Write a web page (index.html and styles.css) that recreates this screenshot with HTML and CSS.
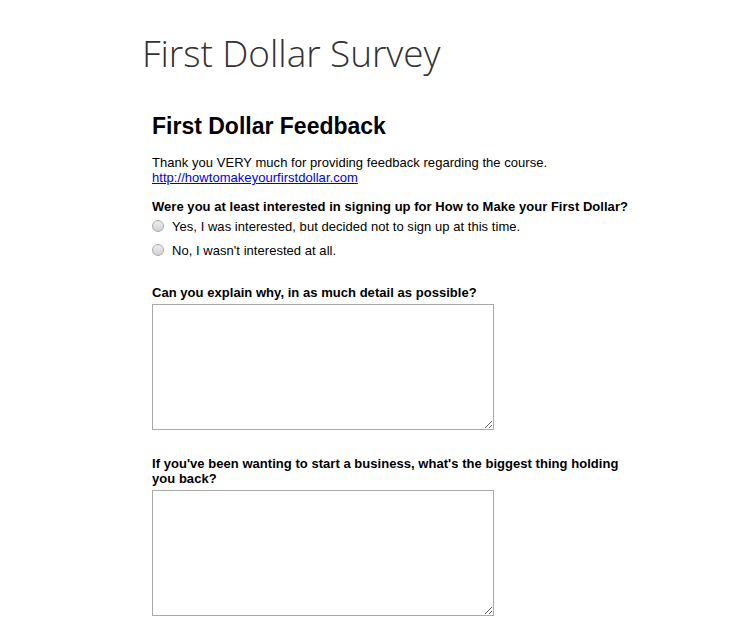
FILE: index.html
```html
<!DOCTYPE html>
<html>
<head>
<meta charset="utf-8">
<title>First Dollar Survey</title>
<link rel="stylesheet" href="styles.css">
</head>
<body>
<header class="site-header">
  <h1 class="site-title">First Dollar Survey</h1>
</header>
<main class="form">
  <h2 class="form-title">First Dollar Feedback</h2>
  <p class="intro">Thank you VERY much for providing feedback regarding the course.<br><a href="#">http://howtomakeyourfirstdollar.com</a></p>
  <div class="question">
    <div class="q-label">Were you at least interested in signing up for How to Make your First Dollar?</div>
    <label class="choice"><input type="radio" name="q1"><span>Yes, I was interested, but decided not to sign up at this time.</span></label>
    <label class="choice"><input type="radio" name="q1"><span>No, I wasn't interested at all.</span></label>
  </div>
  <div class="question text-q">
    <div class="q-label">Can you explain why, in as much detail as possible?</div>
    <textarea class="answer"></textarea>
  </div>
  <div class="question text-q">
    <div class="q-label">If you've been wanting to start a business, what's the biggest thing holding you back?</div>
    <textarea class="answer"></textarea>
  </div>
</main>
</body>
</html>
```

FILE: styles.css
```css
html, body {
  margin: 0;
  padding: 0;
  background: #fff;
}
body {
  font-family: "Liberation Sans", Arial, sans-serif;
  font-size: 13px;
  letter-spacing: 0.04px;
  color: #000;
}
.site-header {
  padding: 28px 0 0 142px;
}
.site-title {
  margin: 0;
  font-family: "Open Sans", sans-serif;
  font-weight: 300;
  font-size: 37px;
  line-height: 49px;
  letter-spacing: -0.05px;
  color: #333;
}
.form {
  width: 480px;
  margin: 35px 0 0 152px;
}
.form-title {
  margin: 0;
  font-size: 23px;
  line-height: 28px;
  font-weight: bold;
  letter-spacing: 0;
}
.intro {
  margin: 15px 0 0;
  line-height: 15px;
}
.intro a {
  color: #00e;
}
.question {
  margin-top: 14px;
}
.q-label {
  font-weight: bold;
  line-height: 15px;
}
.choice {
  display: flex;
  align-items: center;
  gap: 8px;
  height: 24px;
  line-height: 15px;
}
.choice input {
  appearance: none;
  -webkit-appearance: none;
  margin: 0;
  width: 12px;
  height: 12px;
  border-radius: 50%;
  border: 1px solid #aaa;
  background: linear-gradient(#eee, #d2d2d2);
  box-sizing: border-box;
  flex: none;
}
.question.text-q {
  margin-top: 23px;
}
.question.text-q + .text-q {
  margin-top: 26px;
}
.answer {
  display: block;
  margin-top: 4px;
  width: 342px;
  height: 126px;
  box-sizing: border-box;
  border: 1px solid #a9a9a9;
  padding: 2px;
  font: inherit;
}
```
